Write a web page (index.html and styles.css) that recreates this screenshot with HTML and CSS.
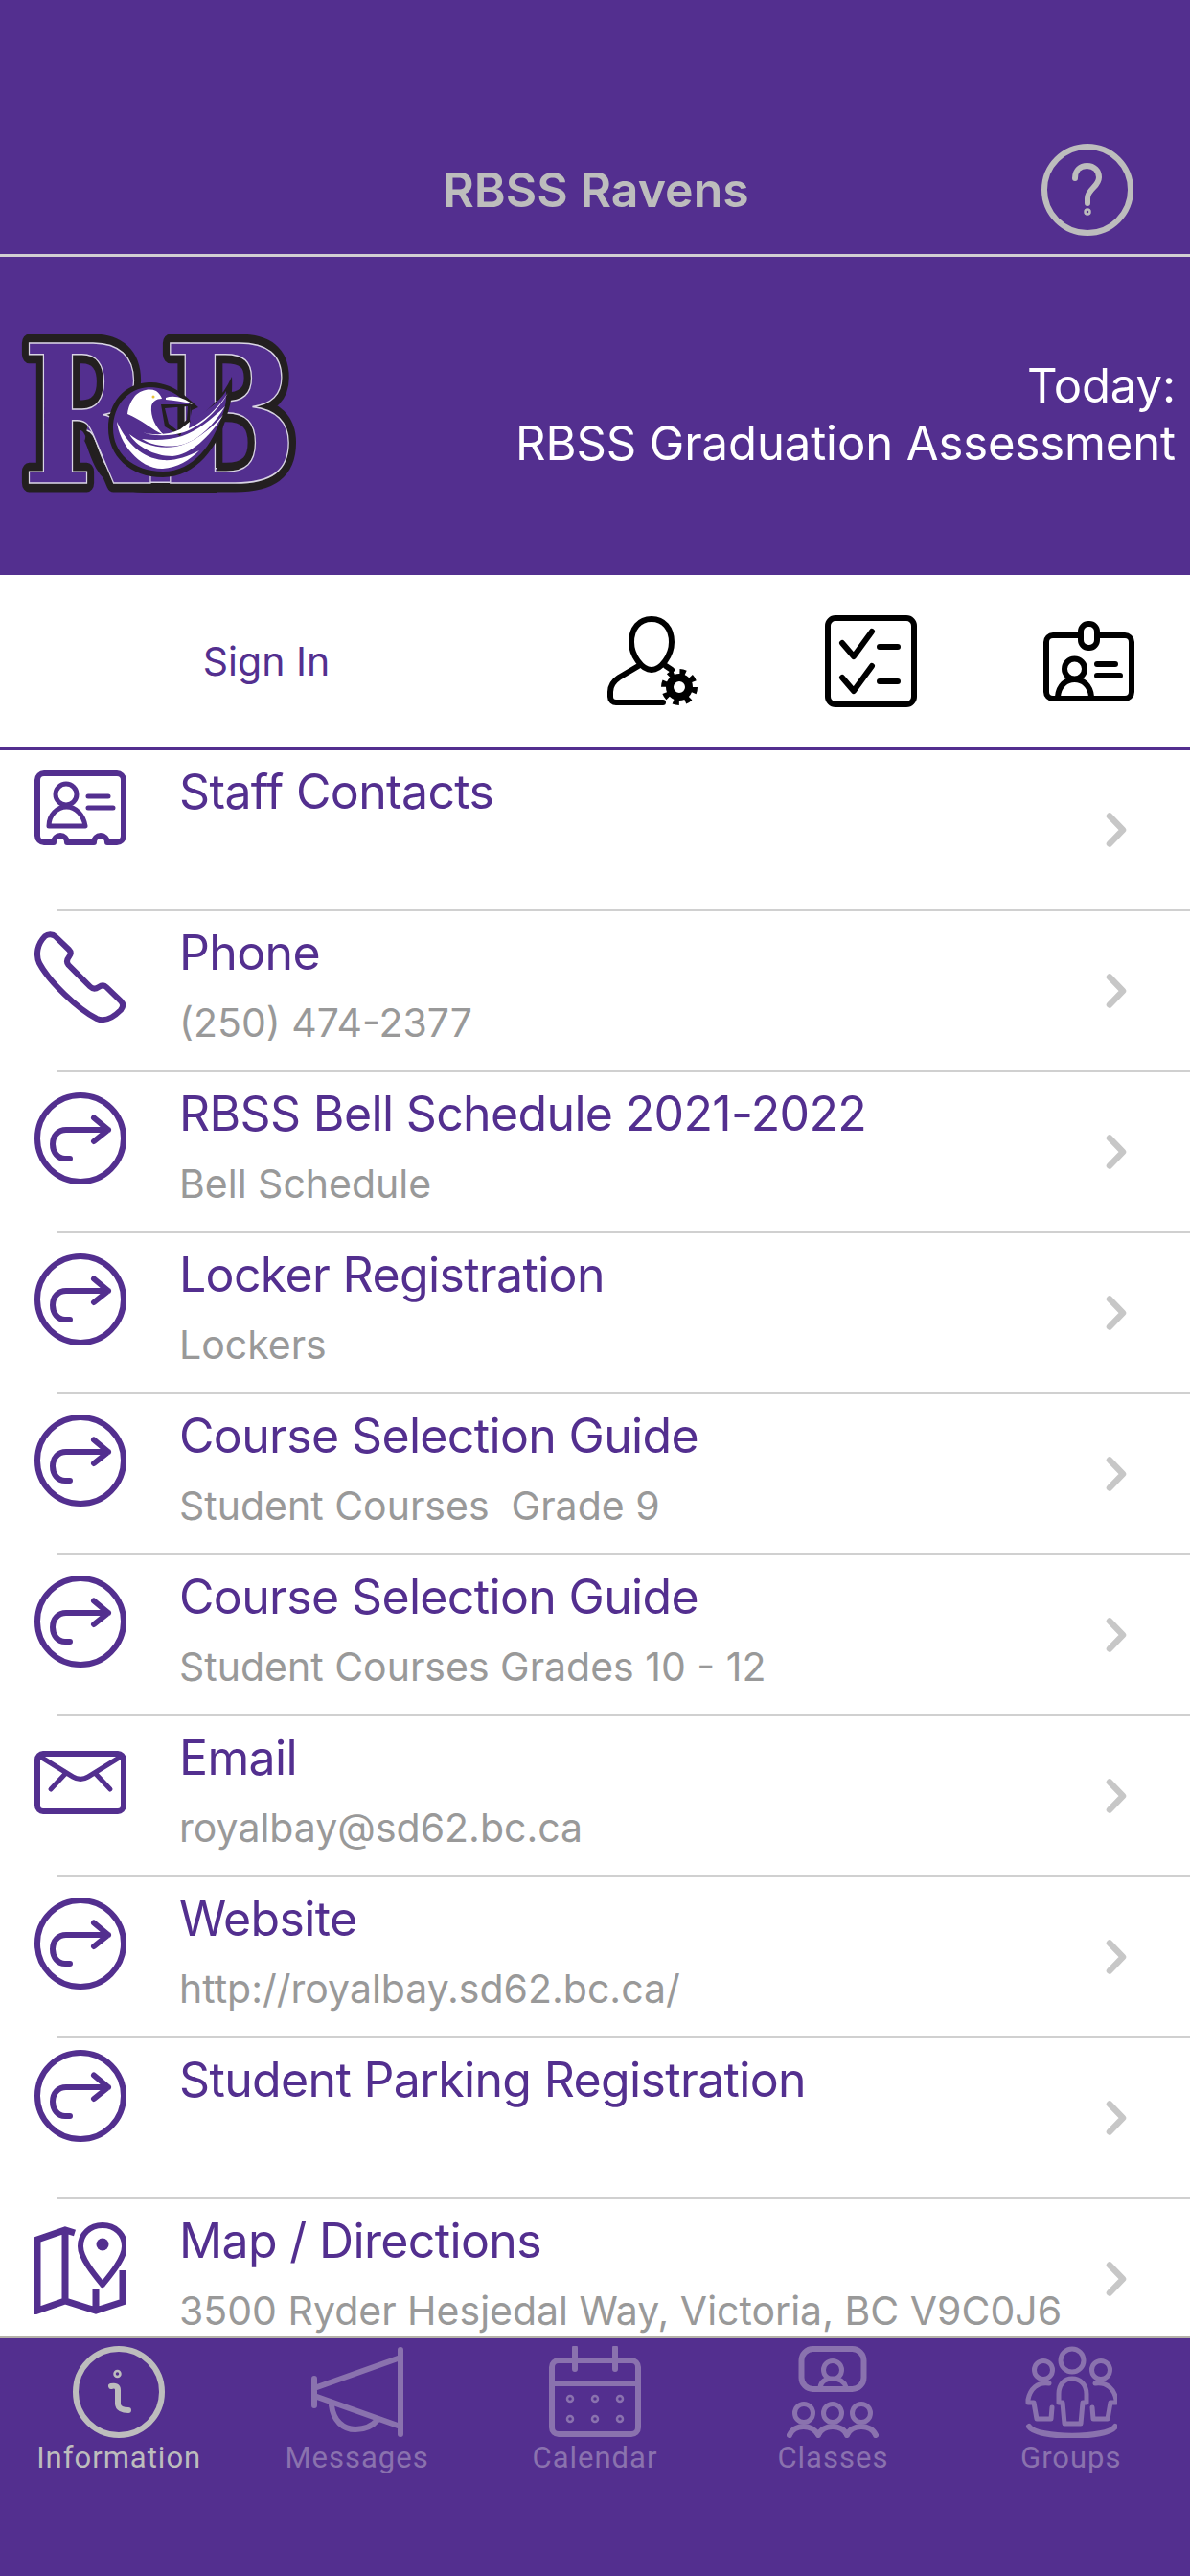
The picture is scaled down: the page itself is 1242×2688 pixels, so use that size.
FILE: index.html
```html
<!DOCTYPE html>
<html lang="en">
<head>
    <meta charset="UTF-8">
    <meta name="viewport" content="width=device-width, initial-scale=1.0">
    <title>RBSS Ravens</title>
    <link rel="stylesheet" href="styles.css">
</head>
<body>
    <svg class="defs" width="0" height="0">
        <symbol id="reply" viewBox="0 0 96 96">
            <circle cx="48" cy="48" r="45"/>
            <path d="M37 69 H32 C24 69 19 62 19 54 C19 45 25 39 33 39 H77 M62 26.5 L77 39 L62 51"/>
        </symbol>
        <symbol id="chevron" viewBox="0 0 24 36">
            <path d="M4 3.5 L18 18 L4 32.5"/>
        </symbol>
    </svg>

    <!-- Top bar -->
    <header class="top-bar">
        <h1>RBSS Ravens</h1>
        <svg class="icon help" viewBox="0 0 96 96">
            <circle cx="48" cy="48" r="45"/>
            <path d="M35 36 C35 27 41 23 47.5 23 C55 23 60 28 60 35 C60 45 48 47 48 57 V62"/>
            <circle class="thin" cx="48" cy="71" r="2.5"/>
        </svg>
    </header>

    <!-- School banner -->
    <section class="banner">
        <svg class="logo" viewBox="20 29 290 170">
            <path class="swoosh-black" d="M92 122 C112 126 106 160 128 172 C136 176 150 176 165 176 H226"/>
            <g class="letter-back">
                <use href="#logo-r"/>
                <use href="#logo-b"/>
            </g>
            <path class="swoosh-white" d="M92 122 C112 126 106 160 128 172 C136 176 150 176 165 176 H226"/>
            <path class="swoosh-fill" d="M92 122 C112 126 106 160 128 172 C136 176 150 176 165 176 H226"/>
            <g class="letter-front">
                <text id="logo-r" transform="translate(23 184) scale(0.8 1)">R</text>
                <text id="logo-b" transform="translate(170 184) scale(0.83 1)">B</text>
            </g>
            <path class="raven-black" d="M155 79 C170 78 183 85 192 92 L207 105 L200 108 L198 120 C215 112 232 95 242 73 C243 95 240 105 236 116 C228 145 205 178 170 178 C135 178 113 155 113 127 C113 100 130 80 155 79 Z M172 106 L196 104 L195 118 L188 124 L186 130 L176 122 Z"/>
            <path class="raven-fill" d="M155 84 C170 84 182 89 191 97 L198 102 L198 118 C215 110 228 100 236 88 C237 100 234 108 231 116 C222 142 203 172 170 172 C138 172 118 152 118 127 C118 103 134 85 155 84 Z M168 102 L198 102 L199 120 L191 127 L188 135 L172 125 Z"/>
            <path class="raven-white" d="M133 112 C134 104 137 98 141 93 C147 87 156 85 163 88 C166 90 168 93 169 96 C163 96 159 99 158 104 C157 115 162 125 171 134 C158 128 148 118 133 112 Z"/>
            <path class="raven-white" d="M173 95 C182 92 192 95 201 102 C192 99 182 98 173 97 Z"/>
            <path class="raven-white" d="M122 120 C124 142 146 170 170 169 C185 168 198 160 208 150 C195 157 182 161 170 160 C148 158 132 142 122 120 Z"/>
            <path class="raven-white" d="M135 133 C142 145 160 156 180 156 C198 155 220 135 233 113 C218 130 200 143 183 146 C165 149 148 143 135 133 Z"/>
            <path class="raven-white" d="M148 138 C160 146 178 147 190 144 C208 139 224 122 235 104 C220 118 205 130 190 135 C177 139 162 140 148 138 Z"/>
            <path class="raven-white" d="M145 130 C160 135 175 134 188 128 L198 120 L197 127 C212 120 226 108 238 90 C228 108 210 125 192 131 C175 136 158 135 145 130 Z"/>
            <circle class="raven-eye" cx="160" cy="94" r="1.5"/>
        </svg>
        <p class="today">Today:<br>RBSS Graduation Assessment</p>
    </section>

    <!-- Sign in and shortcuts -->
    <nav class="toolbar">
        <a class="sign-in">Sign In</a>
        <svg class="icon tool" viewBox="0 0 96 96">
            <path d="M47 4 C34 4 26 14 26 28 C26 42 37 57 47 57 C57 57 68 42 68 28 C68 14 60 4 47 4 Z"/>
            <path d="M35 52 L13 65 C7 69 4 74 4 80 V85 C4 89 7 91 10 91 H59 M62 53 L68 57"/>
            <circle class="gear-teeth" cx="76" cy="75" r="15.5"/>
            <circle class="gear-ring" cx="76" cy="75" r="10"/>
        </svg>
        <svg class="icon tool" viewBox="0 0 96 96">
            <rect x="3" y="3" width="90" height="90" rx="8"/>
            <path d="M18 29 L30 43 L49 17 M57 33 H76 M18 65 L30 79 L49 53 M57 69 H76"/>
        </svg>
        <svg class="icon tool" viewBox="0 0 96 96">
            <rect x="3" y="21" width="89" height="66" rx="7"/>
            <rect class="clip" x="39" y="9" width="17" height="25" rx="8"/>
            <circle cx="32.5" cy="56" r="10.5"/>
            <path d="M15 85 C16 73 24 67 32.5 67 C41 67 49 73 50 85 M56 51 H75 M56 63 H80"/>
        </svg>
    </nav>

    <!-- Information list -->
    <main class="list">
        <div class="row">
            <svg class="icon row-icon" viewBox="0 0 96 96">
                <path d="M10 3 H86 A7 7 0 0 1 93 10 V68 A7 7 0 0 1 86 75 H76 A7 7 0 0 0 62 75 H34 A7 7 0 0 0 20 75 H10 A7 7 0 0 1 3 68 V10 A7 7 0 0 1 10 3 Z"/>
                <circle class="mid" cx="33" cy="25" r="11"/>
                <path class="mid" d="M15 58 C15 46 24 38 33.5 38 C43 38 51 46 53 58 Z M56 27 H77 M56 39 H82"/>
            </svg>
            <div class="text"><div class="title">Staff Contacts</div></div>
            <svg class="chevron"><use href="#chevron"/></svg>
        </div>
        <div class="row">
            <svg class="icon row-icon" viewBox="0 0 96 96">
                <path d="M11 5 C14 2.5 19 2.5 22 5.5 L36 19 C38.5 21.5 38 24 36 26.5 C33.5 29.5 33 32 35.5 35 L58 57.5 C61 60.5 64 60 67 58 C70 56 72.5 55.5 75 58 L90 72.5 C93 75.5 92.5 79 90 82 C82 90 74 95 65 91 C45 81 15 52 5 33 C1 24 3 13 11 5 Z"/>
            </svg>
            <div class="text">
                <div class="title">Phone</div>
                <div class="sub">(250) 474-2377</div>
            </div>
            <svg class="chevron"><use href="#chevron"/></svg>
        </div>
        <div class="row">
            <svg class="icon row-icon"><use href="#reply"/></svg>
            <div class="text">
                <div class="title">RBSS Bell Schedule 2021-2022</div>
                <div class="sub">Bell Schedule</div>
            </div>
            <svg class="chevron"><use href="#chevron"/></svg>
        </div>
        <div class="row">
            <svg class="icon row-icon"><use href="#reply"/></svg>
            <div class="text">
                <div class="title">Locker Registration</div>
                <div class="sub">Lockers</div>
            </div>
            <svg class="chevron"><use href="#chevron"/></svg>
        </div>
        <div class="row">
            <svg class="icon row-icon"><use href="#reply"/></svg>
            <div class="text">
                <div class="title">Course Selection Guide</div>
                <div class="sub">Student Courses &nbsp;Grade 9</div>
            </div>
            <svg class="chevron"><use href="#chevron"/></svg>
        </div>
        <div class="row">
            <svg class="icon row-icon"><use href="#reply"/></svg>
            <div class="text">
                <div class="title">Course Selection Guide</div>
                <div class="sub">Student Courses Grades 10 - 12</div>
            </div>
            <svg class="chevron"><use href="#chevron"/></svg>
        </div>
        <div class="row">
            <svg class="icon row-icon low" viewBox="0 0 96 96">
                <rect x="3" y="3" width="90" height="60" rx="6"/>
                <path class="mid" d="M6 6 L40 27 C45 30 51 30 56 27 L90 6 M32 24 L17 40 M64 24 L79 40"/>
            </svg>
            <div class="text">
                <div class="title">Email</div>
                <div class="sub">royalbay@sd62.bc.ca</div>
            </div>
            <svg class="chevron"><use href="#chevron"/></svg>
        </div>
        <div class="row">
            <svg class="icon row-icon"><use href="#reply"/></svg>
            <div class="text">
                <div class="title">Website</div>
                <div class="sub">http://royalbay.sd62.bc.ca/</div>
            </div>
            <svg class="chevron"><use href="#chevron"/></svg>
        </div>
        <div class="row">
            <svg class="icon row-icon high"><use href="#reply"/></svg>
            <div class="text"><div class="title">Student Parking Registration</div></div>
            <svg class="chevron"><use href="#chevron"/></svg>
        </div>
        <div class="row">
            <svg class="icon row-icon map" viewBox="0 0 96 96">
                <path class="map-lines" d="M42 11 L32 8 L3 18 V92 L32 82 L64 92 L92 83 V50 M32 8 V82 M64 70 V92"/>
                <path d="M71 3 C58 3 48 12 48 25 C48 37 62 54 71 65 C80 54 94 37 94 25 C94 12 84 3 71 3 Z"/>
                <circle class="pin-dot" cx="71" cy="23" r="6.5"/>
            </svg>
            <div class="text">
                <div class="title">Map / Directions</div>
                <div class="sub">3500 Ryder Hesjedal Way, Victoria, BC V9C0J6</div>
            </div>
            <svg class="chevron"><use href="#chevron"/></svg>
        </div>
    </main>

    <!-- Bottom tabs -->
    <footer class="tabs">
        <div class="tab active">
            <svg class="icon tab-icon" viewBox="0 0 96 96">
                <circle cx="48" cy="48" r="45"/>
                <circle class="thin" cx="46.5" cy="29" r="3"/>
                <path d="M40 42 C44 41 47 42 47 46 V60 C47 65 52 67 58 67"/>
            </svg>
            <span>Information</span>
        </div>
        <div class="tab">
            <svg class="icon tab-icon" viewBox="0 0 96 96">
                <path d="M93 4 V92 M3 34 V62 M3 44 L93 12 M3 52 L93 84 M21 62 C23 78 33 87 46 87 C56 87 64 83 69 77"/>
            </svg>
            <span>Messages</span>
        </div>
        <div class="tab">
            <svg class="icon tab-icon" viewBox="0 0 96 96">
                <rect x="3" y="15" width="90" height="77" rx="7"/>
                <path d="M27 2 V24 M69 2 V24 M3 39 H93"/>
                <g class="thin">
                    <circle cx="22" cy="55" r="3"/>
                    <circle cx="48" cy="55" r="3"/>
                    <circle cx="74" cy="55" r="3"/>
                    <circle cx="22" cy="76" r="3"/>
                    <circle cx="48" cy="76" r="3"/>
                    <circle cx="74" cy="76" r="3"/>
                </g>
            </svg>
            <span>Calendar</span>
        </div>
        <div class="tab">
            <svg class="icon tab-icon" viewBox="0 0 96 96">
                <rect x="15.5" y="3" width="65" height="42" rx="12"/>
                <circle class="mid" cx="48" cy="25" r="9.5"/>
                <path class="mid" d="M35 43 C36 37 41 34 48 34 C55 34 60 37 62 43"/>
                <circle class="mid" cx="18" cy="70" r="9.5"/>
                <circle class="mid" cx="48" cy="70" r="9.5"/>
                <circle class="mid" cx="78" cy="70" r="9.5"/>
                <path d="M3 93 C8 81 27 81 33 93 C38 81 58 81 63 93 C68 81 88 81 93 93"/>
            </svg>
            <span>Classes</span>
        </div>
        <div class="tab">
            <svg class="icon tab-icon" viewBox="0 0 96 96">
                <circle class="mid" cx="49" cy="15" r="12"/>
                <circle class="mid" cx="19" cy="25" r="9.5"/>
                <circle class="mid" cx="79" cy="25" r="9.5"/>
                <path class="mid" d="M39 59 H35 V50 C35 40 41 34 49 34 C57 34 64 40 64 50 V59 H60 L58 81 H41 Z"/>
                <path class="mid" d="M25 39 C13 37 5 45 3 56 V59 H9 L12 76 H27 L28 64"/>
                <path class="mid" d="M73 39 C85 37 93 45 95 56 V59 H89 L86 76 H71 L70 64"/>
                <path d="M4 84 C12 97 86 97 94 84"/>
            </svg>
            <span>Groups</span>
        </div>
    </footer>
</body>
</html>
```

FILE: styles.css
```css
body {
    margin: 0;
    height: 2688px;
    display: flex;
    flex-direction: column;
    overflow: hidden;
    font-family: Inter, "Liberation Sans", sans-serif;
    background-color: #532f8f;
}

.defs {
    position: absolute;
}

/* shared icon strokes */
.icon {
    flex: none;
    width: 96px;
    height: 96px;
    fill: none;
    stroke: currentColor;
    stroke-width: 6;
    stroke-linecap: round;
    stroke-linejoin: round;
}

.icon .mid {
    stroke-width: 5;
}

.icon .thin {
    stroke-width: 2.5;
}

/* top bar */
.top-bar {
    flex: none;
    box-sizing: border-box;
    height: 268px;
    padding: 130px 59px 0 61px;
    display: grid;
    grid-template-columns: 96px 1fr 96px;
    align-items: center;
    border-bottom: 3px solid #d2d0d3;
    color: #bdbdbd;
}

.top-bar h1 {
    grid-column: 2;
    margin: 0;
    text-align: center;
    font-size: 50px;
    font-weight: 600;
    color: #bdbdbd;
}

/* banner */
.banner {
    flex: none;
    box-sizing: border-box;
    height: 332px;
    padding: 0 15px 3px 20px;
    display: flex;
    align-items: center;
    justify-content: space-between;
}

.logo {
    width: 290px;
    height: 170px;
    margin-top: 3px;
    overflow: visible;
}

.letter-back,
.letter-front {
    font-family: "DejaVu Serif", serif;
    font-weight: bold;
    font-size: 200px;
}

.letter-back {
    fill: #231f20;
    stroke: #231f20;
    stroke-width: 19;
    stroke-linejoin: round;
}

.letter-front {
    fill: #532f8f;
    stroke: #d9d4e4;
    stroke-width: 1.5;
}

.swoosh-black,
.swoosh-white,
.swoosh-fill {
    fill: none;
    stroke-linecap: butt;
}

.swoosh-black {
    stroke: #231f20;
    stroke-width: 36;
}

.swoosh-white {
    stroke: #d9d4e4;
    stroke-width: 16;
}

.swoosh-fill {
    stroke: #532f8f;
    stroke-width: 13;
}

.raven-black {
    fill: #231f20;
    fill-rule: evenodd;
}

.raven-fill {
    fill: #532f8f;
    fill-rule: evenodd;
}

.raven-white {
    fill: #ffffff;
}

.raven-eye {
    fill: #e8c23a;
}

.today {
    margin: 0;
    text-align: right;
    font-size: 49px;
    line-height: 60px;
    letter-spacing: -0.1px;
    color: #ffffff;
}

/* toolbar */
.toolbar {
    flex: none;
    box-sizing: border-box;
    height: 183px;
    display: flex;
    align-items: center;
    gap: 132px;
    background-color: #ffffff;
    border-bottom: 3px solid #532f8f;
    color: #000000;
}

.sign-in {
    width: 556px;
    margin-right: -55px;
    text-align: center;
    font-size: 41px;
    color: #532f8f;
}

.tool .clip {
    fill: #ffffff;
}

.tool .gear-teeth {
    stroke-width: 7;
    stroke-linecap: butt;
    stroke-dasharray: 6 6.17;
}

.tool .gear-ring {
    stroke-width: 8;
}

/* list */
.list {
    flex: 1;
    min-height: 0;
    overflow: hidden;
    background-color: #ffffff;
}

.row {
    box-sizing: border-box;
    height: 168px;
    margin-left: 60px;
    padding-right: 64px;
    display: flex;
    border-bottom: 2px solid #d0d0d0;
    color: #532f8f;
}

.row-icon {
    margin: 21px 55px 0 -24px;
}

.row-icon.low {
    margin-top: 36px;
}

.row-icon.high {
    margin-top: 12px;
}

.row-icon.map {
    margin-top: 24px;
}

.map-lines {
    stroke-width: 7;
    stroke-linecap: butt;
    stroke-linejoin: miter;
}

.pin-dot {
    fill: currentColor;
    stroke: none;
}

.text {
    flex: 1;
    min-width: 0;
    padding-top: 13px;
}

.title {
    font-size: 50px;
    line-height: 60px;
    letter-spacing: -0.65px;
    white-space: nowrap;
}

.sub {
    margin-top: 18px;
    font-size: 41px;
    line-height: 50px;
    white-space: nowrap;
    color: #999999;
}

.chevron {
    flex: none;
    align-self: center;
    width: 24px;
    height: 36px;
    fill: none;
    stroke: #c7c7c7;
    stroke-width: 6.5;
    stroke-linecap: round;
    stroke-linejoin: round;
}

/* bottom tabs */
.tabs {
    flex: none;
    box-sizing: border-box;
    height: 250px;
    padding-top: 8px;
    display: grid;
    grid-template-columns: repeat(5, 1fr);
    border-top: 2px solid #b5b1a9;
}

.tab {
    display: flex;
    flex-direction: column;
    align-items: center;
    gap: 2px;
    color: #8a72ae;
    font-family: Roboto, sans-serif;
    font-size: 31px;
    line-height: 38px;
    letter-spacing: 1px;
}

.tab.active {
    color: #bdbdbd;
}
```
